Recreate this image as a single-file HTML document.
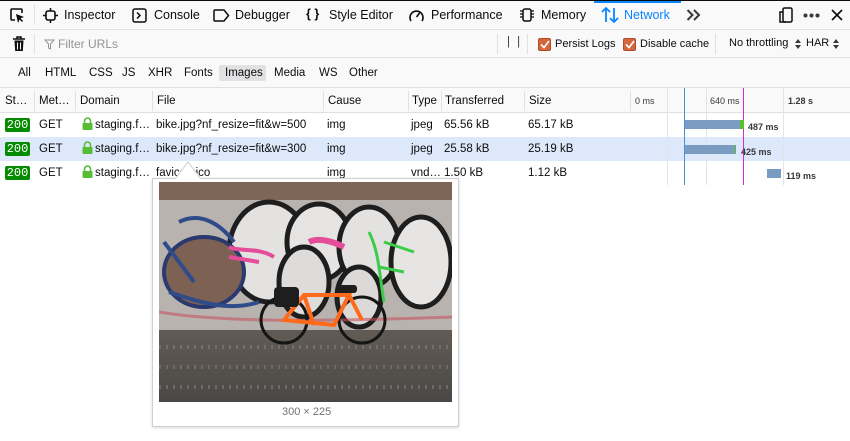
<!DOCTYPE html>
<html><head><meta charset="utf-8">
<style>
*{box-sizing:border-box;margin:0;padding:0}
body{width:850px;height:441px;overflow:hidden;background:#fff;font-family:"Liberation Sans","DejaVu Sans",sans-serif;font-size:11.5px;color:#0c0c0d;position:relative}
.a{position:absolute;white-space:nowrap}
.tab{top:8px;font-size:12.5px;color:#0c0c0d}
.ic{position:absolute}
.bar1{position:absolute;left:0;top:0;width:850px;height:30px;background:#f9f9fa;border-top:1px solid #0c0c0d;border-bottom:1px solid #e0e0e2}
.bar2{position:absolute;left:0;top:30px;width:850px;height:28px;background:#f9f9fa;border-bottom:1px solid #e0e0e2}
.bar3{position:absolute;left:0;top:58px;width:850px;height:30px;background:#f9f9fa;border-bottom:1px solid #e0e0e2}
.hdr{position:absolute;left:0;top:88px;width:850px;height:25px;background:#f9f9fa;border-bottom:1px solid #e0e0e2}
.sep{position:absolute;width:1px;background:#e0e0e2}
.row{position:absolute;left:0;width:850px;height:24px}
.s200{position:absolute;left:5px;top:5px;width:25px;height:14px;background:#058b00;color:#fff;border-radius:2px;font-family:"Liberation Mono",monospace;font-size:12px;line-height:14px;text-align:center}
.cb{position:absolute;top:38px;width:13px;height:13px;background:#d5653a;border-radius:2px;border:1px solid #b04e28}
.tb{font-size:11px}
</style></head><body>
<div class="bar1"></div>
<div style="position:absolute;left:594px;top:1px;width:87px;height:2px;background:#0a84ff"></div>
<svg class="ic" style="left:9px;top:7px" width="16" height="16" viewBox="0 0 16 16"><path d="M6 13H3a1 1 0 0 1-1-1V3a1 1 0 0 1 1-1h9a1 1 0 0 1 1 1v3" fill="none" stroke="#0c0c0d" stroke-width="1.6"/><path d="M7 7l8 3-3.5 1.3L14 14l-1 1-2.4-2.5L9 16z" fill="#0c0c0d"/></svg>
<div class="sep" style="left:34px;top:5px;height:20px"></div>
<svg class="ic" style="left:43px;top:8px" width="15" height="15" viewBox="0 0 15 15"><rect x="3" y="3" width="9" height="9" rx="2" fill="none" stroke="#0c0c0d" stroke-width="1.6"/><path d="M7.5 0v3M7.5 12v3M0 7.5h3M12 7.5h3" stroke="#0c0c0d" stroke-width="1.5"/></svg>
<div class="a tab" style="left:64px">Inspector</div>
<svg class="ic" style="left:132px;top:8px" width="15" height="15" viewBox="0 0 15 15"><rect x="1" y="1" width="13" height="13" rx="2" fill="none" stroke="#0c0c0d" stroke-width="1.5"/><path d="M5 4.5l3 3-3 3" fill="none" stroke="#0c0c0d" stroke-width="1.5"/></svg>
<div class="a tab" style="left:154px">Console</div>
<svg class="ic" style="left:213px;top:9px" width="17" height="13" viewBox="0 0 17 13"><path d="M2 1h9l4.5 5.5L11 12H2a1 1 0 0 1-1-1V2a1 1 0 0 1 1-1z" fill="none" stroke="#0c0c0d" stroke-width="1.5"/></svg>
<div class="a tab" style="left:235px">Debugger</div>
<div class="a tab" style="left:306px;font-weight:bold;top:7px">{ }</div>
<div class="a tab" style="left:329px">Style Editor</div>
<svg class="ic" style="left:408px;top:8px" width="17" height="15" viewBox="0 0 17 15"><path d="M3 13A6.5 6.5 0 1 1 14 13" fill="none" stroke="#0c0c0d" stroke-width="1.6"/><path d="M8.5 9l3-4" stroke="#0c0c0d" stroke-width="1.6"/></svg>
<div class="a tab" style="left:431px">Performance</div>
<svg class="ic" style="left:519px;top:7px" width="16" height="16" viewBox="0 0 16 16"><rect x="4" y="2" width="8" height="12" rx="2" fill="none" stroke="#0c0c0d" stroke-width="1.5"/><path d="M1 4h3M1 7h3M1 10h3M12 4h3M12 7h3M12 10h3" stroke="#0c0c0d" stroke-width="1.2"/></svg>
<div class="a tab" style="left:541px">Memory</div>
<svg class="ic" style="left:601px;top:6px" width="18" height="18" viewBox="0 0 18 18"><path d="M5 16V2M1 6l4-4 4 4M13 2v14M9 12l4 4 4-4" fill="none" stroke="#0a84ff" stroke-width="1.8"/></svg>
<div class="a tab" style="left:624px;color:#0a84ff">Network</div>
<svg class="ic" style="left:686px;top:9px" width="15" height="12" viewBox="0 0 15 12"><path d="M1.5 1l5 5-5 5M8 1l5 5-5 5" fill="none" stroke="#38383d" stroke-width="2"/></svg>
<svg class="ic" style="left:778px;top:7px" width="16" height="16" viewBox="0 0 16 16"><rect x="5" y="1" width="9" height="14" rx="1.5" fill="none" stroke="#0c0c0d" stroke-width="1.5"/><path d="M5 5H2v10h6" fill="none" stroke="#0c0c0d" stroke-width="1.5"/></svg>
<svg class="ic" style="left:803px;top:13px" width="17" height="5" viewBox="0 0 17 5"><circle cx="2.5" cy="2.5" r="2" fill="#38383d"/><circle cx="8.5" cy="2.5" r="2" fill="#38383d"/><circle cx="14.5" cy="2.5" r="2" fill="#38383d"/></svg>
<svg class="ic" style="left:831px;top:9px" width="12" height="12" viewBox="0 0 12 12"><path d="M1 1l10 10M11 1L1 11" stroke="#0c0c0d" stroke-width="1.6"/></svg>

<div class="bar2"></div>
<svg class="ic" style="left:12px;top:36px" width="14" height="16" viewBox="0 0 14 16"><path d="M1 3h12M5 3V1h4v2" fill="none" stroke="#0c0c0d" stroke-width="1.5"/><path d="M2.5 4.5h9l-.7 10.5H3.2z" fill="#0c0c0d"/><path d="M5.5 6.5v7M8.5 6.5v7" stroke="#f9f9fa" stroke-width="1.1"/></svg>
<div class="sep" style="left:34px;top:34px;height:20px"></div>
<svg class="ic" style="left:44px;top:39px" width="11" height="11" viewBox="0 0 11 11"><path d="M1 1h9L6.5 5v5L4.5 9V5z" fill="none" stroke="#939395" stroke-width="1"/></svg>
<div class="a" style="left:58px;top:37px;color:#939395;font-size:12px">Filter URLs</div>
<div class="sep" style="left:497px;top:34px;height:20px"></div>
<div class="a" style="left:507px;top:36px;color:#38383d;letter-spacing:2px">| |</div>
<div class="sep" style="left:527px;top:34px;height:20px"></div>
<div class="cb" style="left:538px"></div>
<svg class="ic" style="left:540px;top:40px" width="10" height="9" viewBox="0 0 10 9"><path d="M1 4.5l3 3L9 1" fill="none" stroke="#fff" stroke-width="1.7"/></svg>
<div class="a tb" style="left:555px;top:38px">Persist Logs</div>
<div class="cb" style="left:623px"></div>
<svg class="ic" style="left:625px;top:40px" width="10" height="9" viewBox="0 0 10 9"><path d="M1 4.5l3 3L9 1" fill="none" stroke="#fff" stroke-width="1.7"/></svg>
<div class="a tb" style="left:640px;top:38px">Disable cache</div>
<div class="sep" style="left:715px;top:34px;height:20px"></div>
<div class="a tb" style="left:729px;top:37px">No throttling</div>
<svg class="ic" style="left:795px;top:39px" width="6" height="10" viewBox="0 0 6 10"><path d="M0 4L3 0l3 4zM0 6l3 4 3-4z" fill="#38383d"/></svg>
<div class="a tb" style="left:806px;top:37px">HAR</div>
<svg class="ic" style="left:833px;top:39px" width="6" height="10" viewBox="0 0 6 10"><path d="M0 4L3 0l3 4zM0 6l3 4 3-4z" fill="#38383d"/></svg>

<div class="bar3"></div>
<div style="position:absolute;left:219px;top:65px;width:47px;height:16px;background:#e1e1e3;border-radius:2px"></div>
<div class="a" style="left:18px;top:67px">All</div>
<div class="a" style="left:45px;top:67px">HTML</div>
<div class="a" style="left:89px;top:67px">CSS</div>
<div class="a" style="left:122px;top:67px">JS</div>
<div class="a" style="left:148px;top:67px">XHR</div>
<div class="a" style="left:184px;top:67px">Fonts</div>
<div class="a" style="left:225px;top:67px">Images</div>
<div class="a" style="left:274px;top:67px">Media</div>
<div class="a" style="left:319px;top:67px">WS</div>
<div class="a" style="left:349px;top:67px">Other</div>

<div class="hdr"></div>
<div class="sep" style="left:34px;top:91px;height:20px"></div>
<div class="sep" style="left:75px;top:91px;height:20px"></div>
<div class="sep" style="left:152px;top:91px;height:20px"></div>
<div class="sep" style="left:323px;top:91px;height:20px"></div>
<div class="sep" style="left:408px;top:91px;height:20px"></div>
<div class="sep" style="left:441px;top:91px;height:20px"></div>
<div class="sep" style="left:524px;top:91px;height:20px"></div>
<div class="sep" style="left:630px;top:91px;height:20px"></div>
<div class="a" style="left:5px;top:95px">St…</div>
<div class="a" style="left:39px;top:95px">Met…</div>
<div class="a" style="left:80px;top:95px">Domain</div>
<div class="a" style="left:157px;top:95px">File</div>
<div class="a" style="left:328px;top:95px">Cause</div>
<div class="a" style="left:412px;top:95px">Type</div>
<div class="a" style="left:445px;top:95px">Transferred</div>
<div class="a" style="left:529px;top:95px">Size</div>
<div class="a" style="left:635px;top:96px;font-size:9px;color:#38383d">0 ms</div>
<div class="a" style="left:710px;top:96px;font-size:9px;color:#38383d">640 ms</div>
<div class="a" style="left:788px;top:96px;font-size:9px;font-weight:bold;color:#38383d">1.28 s</div>

<div class="row" style="top:113px"></div>
<div class="row" style="top:137px;background:#dde9fa"></div>
<div class="row" style="top:161px"></div>
<div class="sep" style="left:667px;top:88px;height:97px;background:#e4e4e6"></div>
<div class="sep" style="left:706px;top:88px;height:97px;background:#e4e4e6"></div>
<div class="sep" style="left:783px;top:88px;height:97px;background:#e4e4e6"></div>
<div class="sep" style="left:684px;top:88px;height:97px;background:#4a90d9"></div>
<div class="sep" style="left:743px;top:88px;height:97px;background:#d62ad6"></div>

<div class="s200" style="top:118px">200</div>
<div class="s200" style="top:142px">200</div>
<div class="s200" style="top:166px">200</div>
<div class="a" style="left:39px;top:119px">GET</div>
<div class="a" style="left:39px;top:143px">GET</div>
<div class="a" style="left:39px;top:167px">GET</div>
<svg class="ic" style="left:82px;top:117px" width="11" height="13" viewBox="0 0 11 13"><path d="M2.5 6V4a3 3 0 0 1 6 0v2" fill="none" stroke="#57bd35" stroke-width="1.6"/><rect x="0.5" y="6" width="10" height="7" rx="1" fill="#57bd35"/></svg>
<svg class="ic" style="left:82px;top:141px" width="11" height="13" viewBox="0 0 11 13"><path d="M2.5 6V4a3 3 0 0 1 6 0v2" fill="none" stroke="#57bd35" stroke-width="1.6"/><rect x="0.5" y="6" width="10" height="7" rx="1" fill="#57bd35"/></svg>
<svg class="ic" style="left:82px;top:165px" width="11" height="13" viewBox="0 0 11 13"><path d="M2.5 6V4a3 3 0 0 1 6 0v2" fill="none" stroke="#57bd35" stroke-width="1.6"/><rect x="0.5" y="6" width="10" height="7" rx="1" fill="#57bd35"/></svg>
<div class="a" style="left:95px;top:119px">staging.f…</div>
<div class="a" style="left:95px;top:143px">staging.f…</div>
<div class="a" style="left:95px;top:167px">staging.f…</div>
<div class="a" style="left:156px;top:119px">bike.jpg?nf_resize=fit&amp;w=500</div>
<div class="a" style="left:156px;top:143px">bike.jpg?nf_resize=fit&amp;w=300</div>
<div class="a" style="left:156px;top:167px">favicon.ico</div>
<div class="a" style="left:327px;top:119px">img</div>
<div class="a" style="left:327px;top:143px">img</div>
<div class="a" style="left:327px;top:167px">img</div>
<div class="a" style="left:411px;top:119px">jpeg</div>
<div class="a" style="left:411px;top:143px">jpeg</div>
<div class="a" style="left:411px;top:167px">vnd…</div>
<div class="a" style="left:444px;top:119px">65.56 kB</div>
<div class="a" style="left:444px;top:143px">25.58 kB</div>
<div class="a" style="left:444px;top:167px">1.50 kB</div>
<div class="a" style="left:528px;top:119px">65.17 kB</div>
<div class="a" style="left:528px;top:143px">25.19 kB</div>
<div class="a" style="left:528px;top:167px">1.12 kB</div>
<div style="position:absolute;left:685px;top:120px;width:56px;height:9px;background:#7a9cc0"></div>
<div style="position:absolute;left:740px;top:120px;width:4px;height:9px;background:#54c228"></div>
<div class="a" style="left:748px;top:122px;font-size:9px;font-weight:bold;color:#38383d">487 ms</div>
<div style="position:absolute;left:685px;top:145px;width:51px;height:9px;background:#7a9cc0"></div>
<div style="position:absolute;left:735px;top:145px;width:1px;height:9px;background:#54c228"></div>
<div class="a" style="left:741px;top:147px;font-size:9px;font-weight:bold;color:#38383d">425 ms</div>
<div style="position:absolute;left:767px;top:169px;width:14px;height:9px;background:#7a9cc0"></div>
<div class="a" style="left:786px;top:171px;font-size:9px;font-weight:bold;color:#38383d">119 ms</div>

<div style="position:absolute;left:152px;top:178px;width:307px;height:249px;background:#fff;border:1px solid #cfcfd1;box-shadow:0 1px 3px rgba(0,0,0,.15)"></div>
<svg class="ic" style="left:175px;top:161px" width="26" height="18" viewBox="0 0 26 18"><path d="M0 18L13 1l13 17" fill="#fff" stroke="#cfcfd1"/></svg>
<svg class="ic" style="left:159px;top:182px" width="293" height="220" viewBox="0 0 293 220">
<defs><linearGradient id="g" x1="0" y1="0" x2="0" y2="1"><stop offset="0" stop-color="#625b55"/><stop offset="1" stop-color="#4a4845"/></linearGradient></defs>
<rect width="293" height="150" fill="#b9b3b0"/>
<rect y="0" width="293" height="18" fill="#7d6658"/>
<ellipse cx="110" cy="70" rx="40" ry="50" fill="#e4e2e0" stroke="#1e1e1e" stroke-width="5"/>
<ellipse cx="160" cy="60" rx="32" ry="38" fill="#e6e4e2" stroke="#1e1e1e" stroke-width="5"/>
<ellipse cx="210" cy="65" rx="30" ry="40" fill="#e3e2e0" stroke="#1e1e1e" stroke-width="5"/>
<ellipse cx="262" cy="80" rx="30" ry="45" fill="#e6e5e3" stroke="#1e1e1e" stroke-width="5"/>
<ellipse cx="145" cy="100" rx="25" ry="35" fill="#dedcda" stroke="#1e1e1e" stroke-width="5"/>
<ellipse cx="200" cy="115" rx="22" ry="30" fill="#dcdad8" stroke="#1e1e1e" stroke-width="5"/>
<ellipse cx="45" cy="90" rx="40" ry="35" fill="#7d6254" stroke="#2b3a6e" stroke-width="4"/>
<path d="M20 40c20-10 40 0 55 20M10 110c30 10 60 20 90 10M5 60l30 40" stroke="#2f4b8a" stroke-width="4" fill="none"/>
<path d="M70 65c10 5 30 0 45 10M70 75l30 5" stroke="#e54c9a" stroke-width="4" fill="none"/>
<path d="M150 60c10-5 25 0 35 5" stroke="#e54c9a" stroke-width="6" fill="none"/>
<path d="M210 50c10 20 10 40 15 70M225 60l30 10M220 85l25 5" stroke="#3ccc4a" stroke-width="3" fill="none"/>
<path d="M0 130c60 10 150 10 293 5" stroke="#c45560" stroke-width="3" fill="none" opacity=".6"/>
<rect y="148" width="293" height="72" fill="url(#g)"/>
<path d="M0 165h293M0 185h293M0 205h293" stroke="#9a948f" stroke-width="4" opacity=".4" stroke-dasharray="2 5"/>
<circle cx="125" cy="138" r="23" fill="none" stroke="#151515" stroke-width="3"/>
<circle cx="203" cy="138" r="23" fill="none" stroke="#151515" stroke-width="3"/>
<path d="M125 138l20-25 45 0-15 30zM145 113l10 30M190 113l13 25M185 105l3 10" fill="none" stroke="#ff6a1a" stroke-width="4"/>
<rect x="115" y="105" width="25" height="20" rx="4" fill="#1e1e1e"/>
<rect x="178" y="103" width="20" height="8" rx="3" fill="#1e1e1e"/>
</svg>
<div class="a" style="left:282px;top:406px;font-size:11px;color:#737373">300 × 225</div>
</body></html>
